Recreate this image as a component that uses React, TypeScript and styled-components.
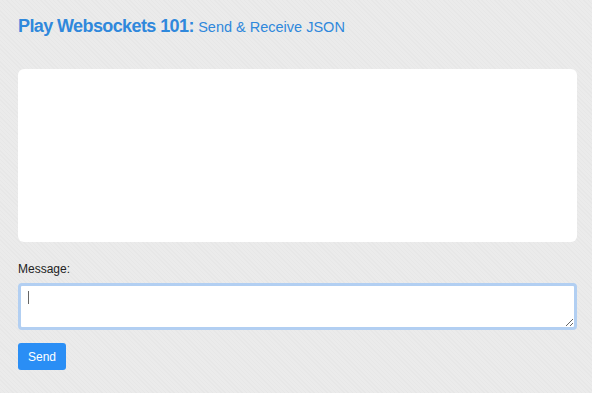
import React from "react";
import styled, { createGlobalStyle } from "styled-components";

const Global = createGlobalStyle`
  html, body { margin: 0; padding: 0; }
  body {
    font-family: "Liberation Sans", Arial, sans-serif;
    background-color: #e9e9e9;
    background-image: repeating-linear-gradient(45deg, #e7e7e7 0px, #e7e7e7 1px, #ebebeb 1px, #ebebeb 3px);
    min-height: 393px;
  }
`;

const Page = styled.div`
  padding: 14px 15px 0 18px;
  display: flex;
  flex-direction: column;
`;

const Title = styled.h1`
  margin: 0;
  color: #2f88dc;
  font-size: 18px;
  font-weight: 700;
  line-height: 24px;
  letter-spacing: -0.6px;
`;

const Sub = styled.span`
  font-size: 14.5px;
  font-weight: 400;
  letter-spacing: 0;
`;

const Output = styled.div`
  margin-top: 30px;
  height: 173px;
  background: #fff;
  border-radius: 6px;
`;

const Label = styled.label`
  margin-top: 20px;
  font-size: 12px;
  color: #222;
  line-height: 14px;
`;

const FieldWrap = styled.div`
  position: relative;
  margin-top: 7px;
`;

const Area = styled.textarea`
  display: block;
  box-sizing: border-box;
  width: 100%;
  height: 47px;
  border: 3px solid #b2cff2;
  border-radius: 4px;
  background: #fff;
  outline: none;
  resize: vertical;
  font-family: inherit;
  font-size: 12px;
  padding: 6px 8px;
`;

const Caret = styled.span`
  position: absolute;
  left: 10px;
  top: 8px;
  width: 1px;
  height: 13px;
  background: #666;
`;

const Button = styled.button`
  margin-top: 13px;
  align-self: flex-start;
  width: 48px;
  height: 27px;
  border: none;
  border-radius: 3px;
  background: #2a8ef5;
  color: #fff;
  font-family: inherit;
  font-size: 12px;
  font-weight: 500;
  padding: 0;
`;

export default function App() {
  return (
    <>
      <Global />
      <Page>
        <Title>
          Play Websockets 101: <Sub>Send &amp; Receive JSON</Sub>
        </Title>
        <Output />
        <Label>Message:</Label>
        <FieldWrap>
          <Area />
          <Caret />
        </FieldWrap>
        <Button>Send</Button>
      </Page>
    </>
  );
}
